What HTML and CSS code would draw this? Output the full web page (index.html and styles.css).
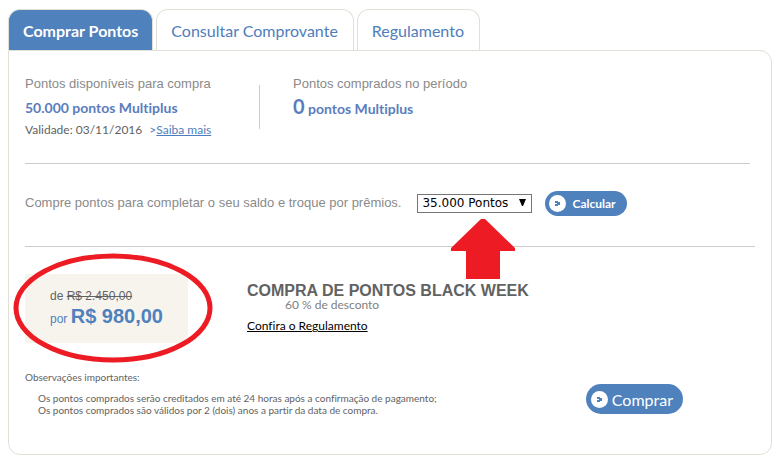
FILE: index.html
```
<!DOCTYPE html>
<html lang="pt-BR">
<head>
  <meta charset="UTF-8" />
  <meta name="viewport" content="width=device-width, initial-scale=1.0" />
  <title>Comprar Pontos</title>
  <link rel="stylesheet" href="styles.css">
</head>
<body>
  <nav class="tabs">
    <a class="tab active" href="#comprar">Comprar Pontos</a>
    <a class="tab" href="#comprovante">Consultar Comprovante</a>
    <a class="tab" href="#regulamento">Regulamento</a>
  </nav>

  <main class="panel" id="comprar">
    <section class="balance">
      <div class="available">
        <p class="label">Pontos disponíveis para compra</p>
        <p class="points">50.000 pontos Multiplus</p>
        <p class="validity">Validade: 03/11/2016 <span class="more">&gt;<a href="#saiba-mais">Saiba mais</a></span></p>
      </div>
      <div class="bought">
        <p class="label">Pontos comprados no período</p>
        <p class="points"><span class="zero">0</span> pontos Multiplus</p>
      </div>
    </section>

    <form class="calc">
      <label class="label" for="pontos">Compre pontos para completar o seu saldo e troque por prêmios.</label>
      <div class="picker">
        <select id="pontos">
          <option>35.000 Pontos</option>
        </select>
        <svg class="caret" width="7" height="7" viewBox="0 0 7 7"><path d="M0 0h7L4 7H3z" fill="#000"/></svg>
        <svg class="arrow" width="64" height="60" viewBox="0 0 64 60"><path d="M30 0h4l30 29v3H49v28H15V32H0v-3z" fill="#ed1c24"/></svg>
      </div>
      <button class="btn small" type="button">
        <svg width="17" height="17" viewBox="0 0 17 17"><circle cx="8.500" cy="8.500" r="8.500" fill="#fff"/><path d="M6 6h3v1h2v3H9v1H6V9h2V8H6z" fill="#4f81bd"/></svg>
        Calcular
      </button>
    </form>

    <section class="offer">
      <div class="price">
        <p class="from">de <del>R$ 2.450,00</del></p>
        <p class="to">por <strong>R$ 980,00</strong></p>
        <svg class="ring" width="200" height="110" viewBox="0 0 200 110"><ellipse cx="100" cy="55" rx="97" ry="52" fill="none" stroke="#ed1c24" stroke-width="5"/></svg>
      </div>
      <div class="promo">
        <h2>COMPRA DE PONTOS BLACK WEEK</h2>
        <p class="discount">60 % de desconto</p>
        <a class="rules" href="#regulamento">Confira o Regulamento</a>
      </div>
    </section>

    <section class="footer">
      <div class="notes">
        <p>Observações importantes:</p>
        <ul>
          <li>Os pontos comprados serão creditados em até 24 horas após a confirmação de pagamento;</li>
          <li>Os pontos comprados são válidos por 2 (dois) anos a partir da data de compra.</li>
        </ul>
      </div>
      <button class="btn" type="button">
        <svg width="17" height="17" viewBox="0 0 17 17"><circle cx="8.500" cy="8.500" r="8.500" fill="#fff"/><path d="M6 6h3v1h2v3H9v1H6V9h2V8H6z" fill="#4f81bd"/></svg>
        Comprar
      </button>
    </section>
  </main>
</body>
</html>
```
FILE: styles.css
```
* {
  box-sizing: border-box;
}
body {
  margin: 9px 10px 0 8px;
  font-family: "Trebuchet MS", Lato, sans-serif;
  font-size: 12px;
  font-variant-ligatures: none;
  color: #626262;
  background: #fff;
}
p, h2, ul {
  margin: 0;
  padding: 0;
}
.tabs {
  display: flex;
  gap: 3px;
}
.tab {
  height: 41px;
  padding: 0 15px 0 14px;
  border: 1px solid #e0e0d6;
  border-bottom: none;
  border-radius: 12px 12px 0 0;
  font-size: 16px;
  line-height: 42px;
  color: #4f7dbb;
  text-decoration: none;
}
.tab.active {
  padding-right: 14px;
  background: #4f81bd;
  color: #fff;
  font-weight: bold;
}
.panel {
  padding: 21px 16px 38px;
  border: 1px solid #e0e0d6;
  border-radius: 0 12px 12px 12px;
}
.label {
  font-family: Arial, "Liberation Sans", sans-serif;
  font-size: 13px;
  line-height: 24px;
  color: #8a8a8a;
}
.balance {
  display: flex;
  margin-right: 5px;
  padding-bottom: 23px;
  border-bottom: 1px solid #ccc;
}
.available {
  position: relative;
  width: 268px;
}
.available::after {
  content: "";
  position: absolute;
  top: 13px;
  right: 33px;
  height: 44px;
  border-left: 1px solid #ccc;
}
.points {
  font-size: 14px;
  font-weight: bold;
  line-height: 24px;
  color: #5b7dbe;
}
.bought .points {
  line-height: 20px;
}
.zero {
  font-size: 20px;
}
.validity {
  line-height: 20px;
}
.more {
  margin-left: 4px;
  color: #4f7dbb;
}
.more a {
  color: #4f7dbb;
}
.calc {
  display: flex;
  align-items: center;
  height: 83px;
  padding-bottom: 4px;
  border-bottom: 1px solid #ccc;
}
.picker {
  position: relative;
  margin: 0 13px 0 16px;
}
.picker select {
  display: block;
  width: 115px;
  height: 19px;
  padding: 0 4px;
  border: 1px solid #767676;
  border-radius: 0;
  appearance: none;
  background: #fff;
  font-family: Verdana, "DejaVu Sans", sans-serif;
  font-size: 12px;
  color: #000;
}
.caret {
  position: absolute;
  top: 5px;
  right: 6px;
  pointer-events: none;
}
.arrow {
  position: absolute;
  top: 25px;
  left: 34px;
}
.btn {
  display: flex;
  align-items: center;
  gap: 4px;
  height: 30px;
  padding: 0 10px 0 5px;
  border: none;
  border-radius: 15px;
  background: #4f81bd;
  font-family: inherit;
  font-size: 16px;
  color: #fff;
}
.btn.small {
  gap: 6px;
  height: 25px;
  padding: 0 11px 0 4px;
  font-size: 12px;
  font-weight: bold;
}
.offer {
  display: flex;
  gap: 59px;
  padding-top: 27px;
}
.price {
  position: relative;
  width: 163px;
  height: 69px;
  padding: 13px 0 0 25px;
  background: #f7f4ee;
  font-family: Arial, "Liberation Sans", sans-serif;
}
.from {
  line-height: 18px;
}
.to {
  line-height: 22px;
  color: #4f81bd;
}
.to strong {
  font-size: 20px;
}
.ring {
  position: absolute;
  top: -21px;
  left: -12px;
}
.promo h2 {
  padding-top: 9px;
  font-family: Arial, "Liberation Sans", sans-serif;
  font-size: 16px;
  line-height: 16px;
}
.discount {
  padding-left: 38px;
  line-height: 12px;
  color: #808080;
}
.rules {
  display: inline-block;
  padding-top: 6px;
  line-height: 18px;
  color: #000;
}
.footer {
  display: flex;
  justify-content: space-between;
  align-items: flex-start;
  padding: 28px 72px 0 0;
  font-size: 10px;
  line-height: 12px;
}
.footer .btn {
  margin-top: 13px;
}
.notes ul {
  padding: 9px 0 0 13px;
  list-style: none;
}
```
